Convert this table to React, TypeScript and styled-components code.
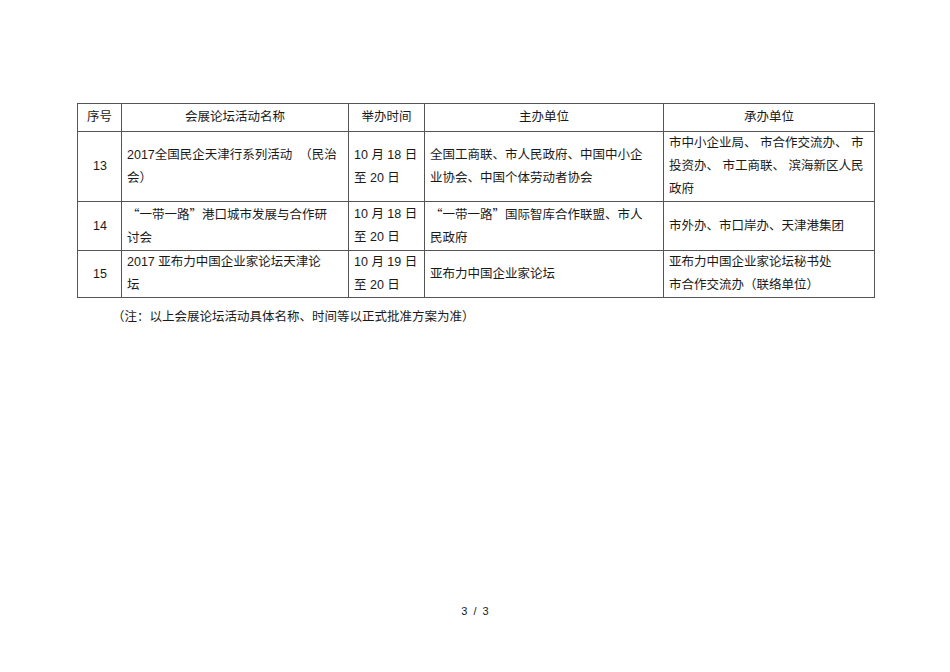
import React from "react";
import styled, { createGlobalStyle } from "styled-components";

const Global = createGlobalStyle`
  html, body { margin: 0; padding: 0; background: #ffffff; }
  body {
    font-family: "Liberation Sans", "Noto Sans CJK SC", sans-serif;
    color: #1a1a1a;
  }
`;

const Page = styled.div`
  width: 950px;
  height: 672px;
  box-sizing: border-box;
  padding: 103px 0 0 77px;
  display: flex;
  flex-direction: column;
`;

const Table = styled.table`
  border-collapse: collapse;
  table-layout: fixed;
  width: 797px;
  font-size: 12.5px;
  line-height: 23px;
`;

const HeadCell = styled.th`
  border: 1px solid #555;
  font-weight: normal;
  text-align: center;
  height: 27px;
  padding: 0 4px;
  vertical-align: middle;
`;

const Cell = styled.td<{ $center?: boolean; $h?: number }>`
  border: 1px solid #555;
  padding: 0 4px 0 5px;
  text-align: ${(p) => (p.$center ? "center" : "left")};
  vertical-align: middle;
  height: ${(p) => (p.$h ? `${p.$h}px` : "auto")};
  white-space: nowrap;
  overflow: hidden;
`;

const Line = styled.div`
  white-space: pre;
`;

const Quote = styled.span`
  font-family: "Noto Sans CJK SC", sans-serif;
  font-feature-settings: "fwid" 1;
  display: inline-block;
  width: 1em;
  text-align: center;
`;

const Note = styled.div`
  margin: 9px 0 0 35px;
  font-size: 12.5px;
  line-height: 20px;
`;

const Spacer = styled.div`
  flex: 1;
`;

const PageNum = styled.div`
  margin: 0 0 55px -77px;
  text-align: center;
  font-size: 11px;
  width: 950px;
  word-spacing: 3px;
`;

const renderText = (t: string) => {
  const parts = t.split(/([“”])/);
  return parts.map((p, i) =>
    p === "“" || p === "”" ? <Quote key={i}>{p}</Quote> : <React.Fragment key={i}>{p}</React.Fragment>
  );
};

const L = ({ lines }: { lines: string[] }) => (
  <>
    {lines.map((t, i) => (
      <Line key={i}>{renderText(t)}</Line>
    ))}
  </>
);

const rows = [
  {
    no: "13",
    h: 68,
    name: ["2017全国民企天津行系列活动  （民治", "会）"],
    time: ["10 月 18 日", "至 20 日"],
    host: ["全国工商联、市人民政府、中国中小企", "业协会、中国个体劳动者协会"],
    org: ["市中小企业局、 市合作交流办、 市", "投资办、 市工商联、 滨海新区人民", "政府"],
  },
  {
    no: "14",
    h: 46,
    name: ["“一带一路”港口城市发展与合作研", "讨会"],
    time: ["10 月 18 日", "至 20 日"],
    host: ["“一带一路”国际智库合作联盟、市人", "民政府"],
    org: ["市外办、市口岸办、天津港集团"],
  },
  {
    no: "15",
    h: 45,
    name: ["2017 亚布力中国企业家论坛天津论", "坛"],
    time: ["10 月 19 日", "至 20 日"],
    host: ["亚布力中国企业家论坛"],
    org: ["亚布力中国企业家论坛秘书处", "市合作交流办（联络单位）"],
  },
];

export default function App() {
  return (
    <>
      <Global />
      <Page>
        <Table>
          <colgroup>
            <col style={{ width: 44 }} />
            <col style={{ width: 227 }} />
            <col style={{ width: 76 }} />
            <col style={{ width: 239 }} />
            <col style={{ width: 211 }} />
          </colgroup>
          <thead>
            <tr>
              <HeadCell>序号</HeadCell>
              <HeadCell>会展论坛活动名称</HeadCell>
              <HeadCell>举办时间</HeadCell>
              <HeadCell>主办单位</HeadCell>
              <HeadCell>承办单位</HeadCell>
            </tr>
          </thead>
          <tbody>
            {rows.map((r) => (
              <tr key={r.no}>
                <Cell $center $h={r.h}>{r.no}</Cell>
                <Cell><L lines={r.name} /></Cell>
                <Cell><L lines={r.time} /></Cell>
                <Cell><L lines={r.host} /></Cell>
                <Cell><L lines={r.org} /></Cell>
              </tr>
            ))}
          </tbody>
        </Table>
        <Note>（注：以上会展论坛活动具体名称、时间等以正式批准方案为准）</Note>
        <Spacer />
        <PageNum>3 / 3</PageNum>
      </Page>
    </>
  );
}
